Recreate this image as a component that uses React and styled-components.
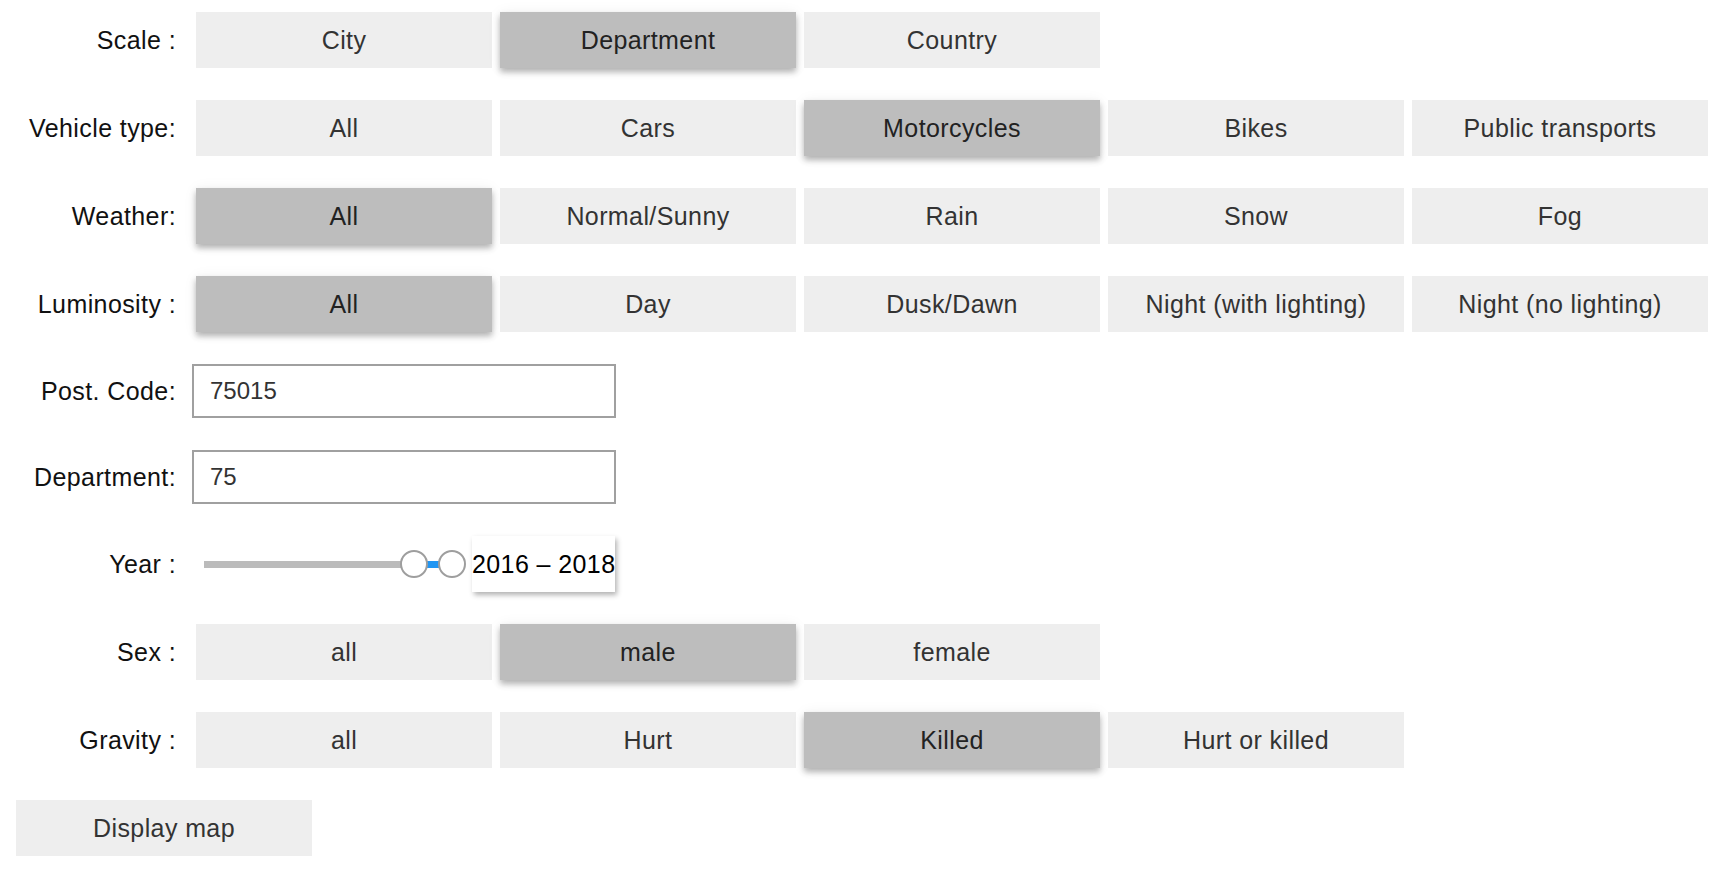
import React, { useState } from 'react';
import styled, { createGlobalStyle, css } from 'styled-components';

const GlobalStyle = createGlobalStyle`
  html, body {
    margin: 0;
    padding: 0;
    background: #ffffff;
  }
  body {
    font-family: "Liberation Sans", Arial, Helvetica, sans-serif;
    font-size: 25px;
    letter-spacing: 0.4px;
    color: #111;
  }
`;

const Page = styled.div`
  padding: 12px 0 0 12px;
`;

const Row = styled.div`
  display: flex;
  align-items: center;
  height: ${({ h }) => h || 56}px;
  margin-bottom: 32px;
`;

const Label = styled.div`
  width: 164px;
  margin-right: 16px;
  text-align: right;
  color: #111;
  white-space: nowrap;
  flex-shrink: 0;
`;

const Group = styled.div`
  display: flex;
  height: 100%;
`;

const Choice = styled.button`
  width: 296px;
  height: 56px;
  margin: 0 4px;
  border: none;
  padding: 0;
  font: inherit;
  letter-spacing: inherit;
  color: #333;
  background: #eeeeee;
  cursor: pointer;
  ${({ active }) => active && css`
    background: #bdbdbd;
    color: #222;
    box-shadow: 0 4px 6px rgba(0, 0, 0, 0.28), 0 1px 14px rgba(0, 0, 0, 0.06);
  `}
`;

const TextInput = styled.input`
  box-sizing: border-box;
  width: 424px;
  height: 54px;
  border: 2px solid #a0a0a0;
  padding: 0 16px;
  font: inherit;
  font-size: 24px;
  letter-spacing: 0;
  color: #333;
  outline: none;
`;

const SliderWrap = styled.div`
  padding: 0 16px 0 12px;
  display: flex;
  align-items: center;
  height: 100%;
`;

const Track = styled.div`
  position: relative;
  width: 248px;
  height: 7px;
  background: #bbbbbb;
`;

const Range = styled.div`
  position: absolute;
  top: 0;
  bottom: 0;
  background: #2196f3;
`;

const Thumb = styled.div`
  position: absolute;
  top: 50%;
  width: 28px;
  height: 28px;
  box-sizing: border-box;
  margin: -14px 0 0 -14px;
  border-radius: 50%;
  border: 2px solid #9e9e9e;
  background: #ffffff;
`;

const ValueBox = styled.div`
  margin-left: 4px;
  height: 56px;
  width: 143px;
  display: flex;
  align-items: center;
  background: #ffffff;
  color: #000;
  box-shadow: 2px 3px 5px rgba(0, 0, 0, 0.3);
  white-space: nowrap;
`;

const Submit = styled(Choice)`
  margin: 0 4px;
`;

const rows = [
  { key: 'scale', label: 'Scale :', options: ['City', 'Department', 'Country'], value: 'Department' },
  { key: 'vehicle', label: 'Vehicle type:', options: ['All', 'Cars', 'Motorcycles', 'Bikes', 'Public transports'], value: 'Motorcycles' },
  { key: 'weather', label: 'Weather:', options: ['All', 'Normal/Sunny', 'Rain', 'Snow', 'Fog'], value: 'All' },
  { key: 'lum', label: 'Luminosity :', options: ['All', 'Day', 'Dusk/Dawn', 'Night (with lighting)', 'Night (no lighting)'], value: 'All' },
];

const lowerRows = [
  { key: 'sex', label: 'Sex :', options: ['all', 'male', 'female'], value: 'male' },
  { key: 'gravity', label: 'Gravity :', options: ['all', 'Hurt', 'Killed', 'Hurt or killed'], value: 'Killed' },
];

function ChoiceRow({ label, options, value, onPick }) {
  return (
    <Row>
      <Label>{label}</Label>
      <Group>
        {options.map(o => (
          <Choice key={o} active={o === value} onClick={() => onPick(o)}>{o}</Choice>
        ))}
      </Group>
    </Row>
  );
}

const MIN_YEAR = 2005;
const MAX_YEAR = 2018;

export default function App() {
  const [sel, setSel] = useState(() => {
    const s = {};
    [...rows, ...lowerRows].forEach(r => { s[r.key] = r.value; });
    return s;
  });
  const [postCode, setPostCode] = useState('75015');
  const [dept, setDept] = useState('75');
  const years = [2016, 2018];

  const pick = key => v => setSel(prev => ({ ...prev, [key]: v }));
  const pct = y => ((y - MIN_YEAR) / (MAX_YEAR - MIN_YEAR)) * 100;

  return (
    <>
      <GlobalStyle />
      <Page>
        {rows.map(r => (
          <ChoiceRow key={r.key} label={r.label} options={r.options} value={sel[r.key]} onPick={pick(r.key)} />
        ))}

        <Row h={54}>
          <Label>Post. Code:</Label>
          <TextInput value={postCode} onChange={e => setPostCode(e.target.value)} />
        </Row>

        <Row h={54}>
          <Label>Department:</Label>
          <TextInput value={dept} onChange={e => setDept(e.target.value)} />
        </Row>

        <Row>
          <Label>Year :</Label>
          <SliderWrap>
            <Track>
              <Range style={{ left: `${pct(years[0])}%`, width: `${pct(years[1]) - pct(years[0])}%` }} />
              <Thumb style={{ left: `${pct(years[0])}%` }} />
              <Thumb style={{ left: `${pct(years[1])}%` }} />
            </Track>
          </SliderWrap>
          <ValueBox>{years[0]} – {years[1]}</ValueBox>
        </Row>

        {lowerRows.map(r => (
          <ChoiceRow key={r.key} label={r.label} options={r.options} value={sel[r.key]} onPick={pick(r.key)} />
        ))}

        <Row>
          <Submit>Display map</Submit>
        </Row>
      </Page>
    </>
  );
}
